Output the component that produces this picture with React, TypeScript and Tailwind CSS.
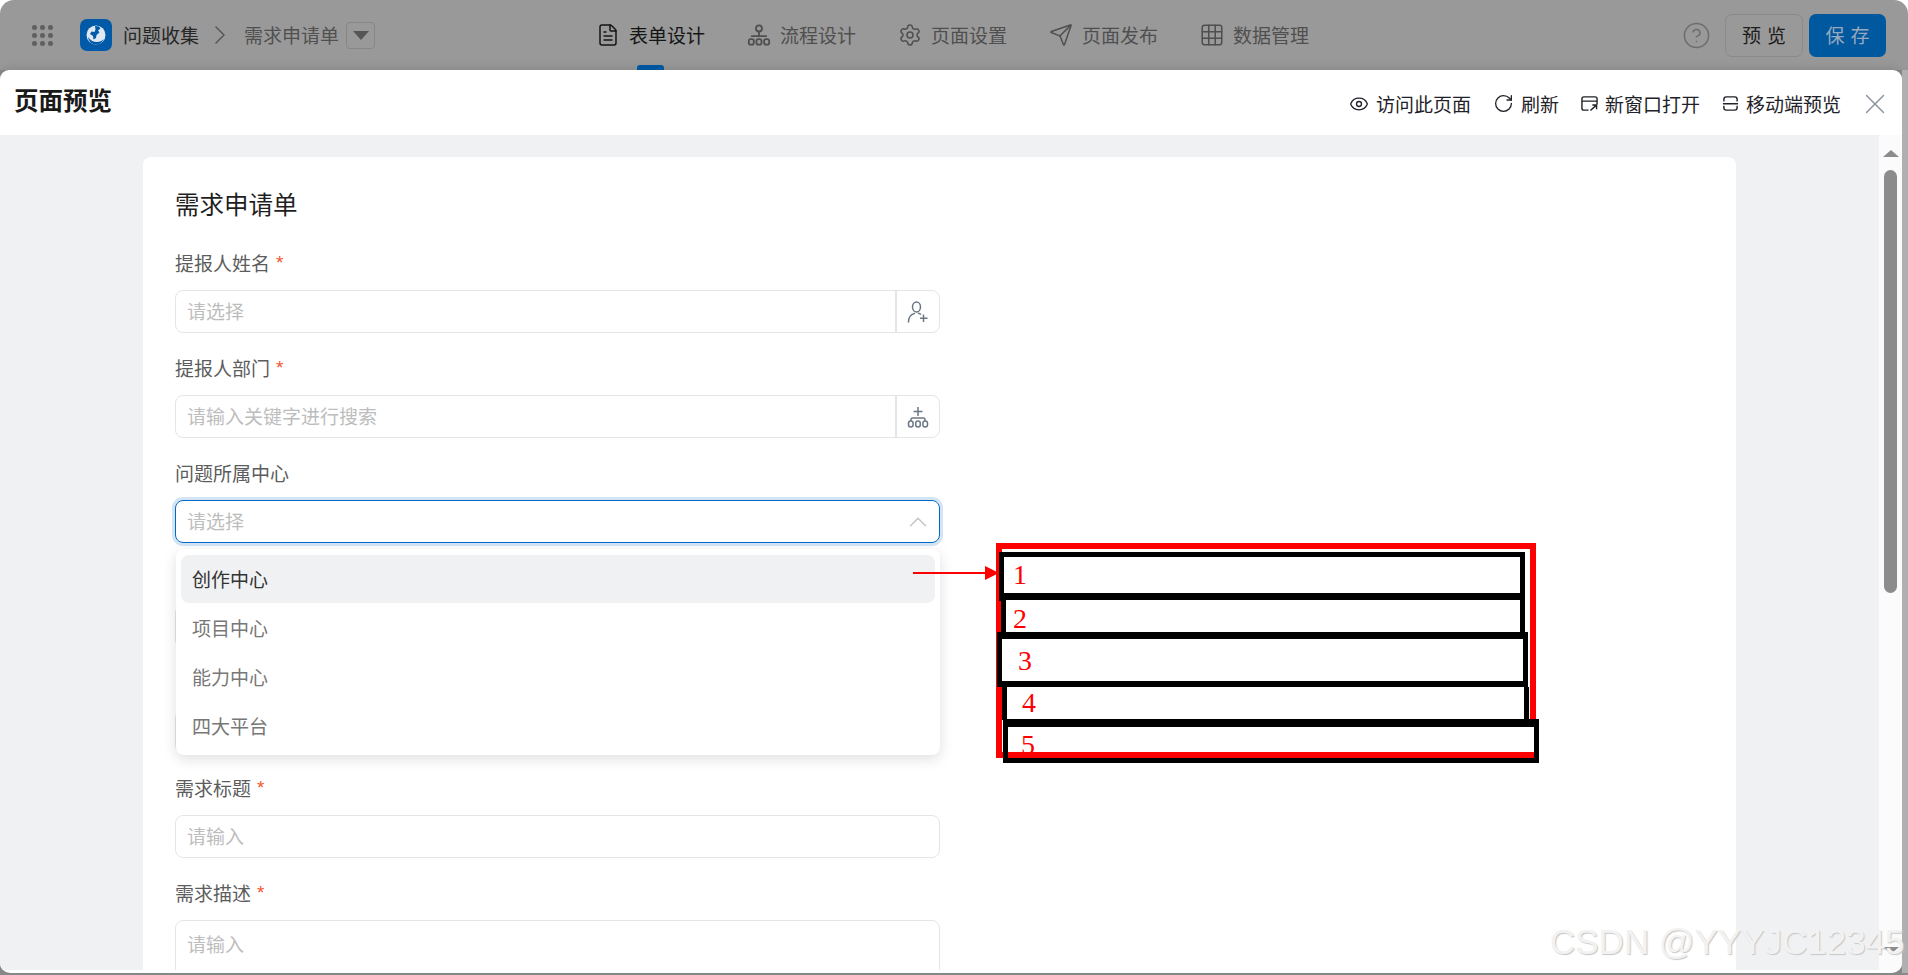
import React from "react";
import {
  ChevronRight,
  ChevronUp,
  CircleHelp,
  Eye,
  FileText,
  Grid3x3,
  RotateCw,
  Send,
  Settings,
  X,
} from "lucide-react";

const OrgIcon = ({ className }: { className?: string }) => (
  <svg viewBox="0 0 20 20" fill="none" stroke="currentColor" strokeWidth="1.5" className={className}>
    <circle cx="10" cy="4.5" r="2.5" />
    <path d="M4 11h12" strokeLinecap="round" />
    <path d="M10 7v4" />
    <rect x="1.5" y="13.5" width="4.2" height="4.5" rx="1.6" />
    <rect x="7.900" y="13.5" width="4.2" height="4.5" rx="1.6" />
    <rect x="14.3" y="13.5" width="4.2" height="4.5" rx="1.6" />
  </svg>
);

const DeptAddIcon = () => (
  <svg viewBox="0 0 22 22" fill="none" stroke="#6b7785" strokeWidth="1.5" className="h-[22px] w-[22px]">
    <path d="M11 1v9M6.5 5.500h9" />
    <path d="M4 15v-1.500c0-.8.6-1.500 1.500-1.500h11c.9 0 1.500.7 1.500 1.500V15" />
    <rect x="1.5" y="15" width="4.6" height="6" rx="2.2" />
    <rect x="8.7" y="15" width="4.6" height="6" rx="2.2" />
    <rect x="15.9" y="15" width="4.6" height="6" rx="2.2" />
  </svg>
);

const UserAddIcon = () => (
  <svg viewBox="0 0 22 22" fill="none" stroke="#6b7785" strokeWidth="1.5" className="h-[22px] w-[22px]">
    <ellipse cx="9.5" cy="6" rx="4" ry="5" />
    <path d="M1.5 21c0-4.500 2.500-7.500 6-8.600M11.500 12.200c.8.2 1.400.5 2 .9" strokeLinecap="round" />
    <path d="M16.500 13.500v7.500M13 17.200h7.500" />
  </svg>
);

const WindowIcon = () => (
  <svg viewBox="0 0 18 18" fill="none" stroke="#1f2329" strokeWidth="1.5" className="h-[17px] w-[17px]">
    <path d="M8 16H3a2 2 0 0 1-2-2V4a2 2 0 0 1 2-2h12a2 2 0 0 1 2 2v6" />
    <path d="M1 6.500h16" />
    <path d="M10 16.500l6-5.500M12 10.500h4.500V15" />
  </svg>
);

const MobileIcon = () => (
  <svg viewBox="0 0 18 18" fill="none" stroke="#1f2329" strokeWidth="1.5" className="h-[17px] w-[17px]">
    <path d="M2 7V4.500A2.500 2.500 0 0 1 4.500 2h9A2.500 2.500 0 0 1 16 4.500V7" />
    <path d="M1 9.200h16" />
    <path d="M2 11.500v2A2.500 2.500 0 0 0 4.500 16h9a2.500 2.500 0 0 0 2.500-2.500v-2" />
  </svg>
);

const Logo = () => (
  <div className="flex h-[32px] w-[32px] items-center justify-center rounded-[7px] bg-[#005aa8]">
    <svg viewBox="0 0 22 22" className="h-[22px] w-[22px]">
      <circle cx="11" cy="11" r="9.5" fill="#dfe8f2" />
      <path
        d="M10 2l4 .5 1.500 2-2.500 2 1.500 2-3 2.500-.5 3-2.500 1.500-.5-3.500L5 10l1.500-2.500 3 .5 1-2.500zM3 13c2 3 5 5 9 5 3 0 5-1 6.500-3-1 3.500-4 5.500-7.500 5.500-4 0-7.500-3-8-7.500z"
        fill="#005aa8"
      />
    </svg>
  </div>
);

const navItems = [
  { label: "表单设计", icon: <FileText className="h-[24px] w-[24px]" strokeWidth={1.5} />, active: true },
  { label: "流程设计", icon: <OrgIcon className="h-[24px] w-[24px]" /> },
  { label: "页面设置", icon: <Settings className="h-[24px] w-[24px]" strokeWidth={1.5} /> },
  { label: "页面发布", icon: <Send className="h-[24px] w-[24px]" strokeWidth={1.5} /> },
  { label: "数据管理", icon: <Grid3x3 className="-m-px h-[26px] w-[26px]" strokeWidth={1.4} /> },
];

const headerActions = [
  { label: "访问此页面", icon: <Eye className="h-[20px] w-[20px]" strokeWidth={1.6} /> },
  { label: "刷新", icon: <RotateCw className="h-[21px] w-[21px]" strokeWidth={1.5} /> },
  { label: "新窗口打开", icon: <WindowIcon /> },
  { label: "移动端预览", icon: <MobileIcon /> },
];

const options = ["创作中心", "项目中心", "能力中心", "四大平台"];

const numbers = [
  { n: "1", pos: "left-[1013px] top-[559px]" },
  { n: "2", pos: "left-[1013px] top-[603px]" },
  { n: "3", pos: "left-[1018px] top-[645px]" },
  { n: "4", pos: "left-[1022px] top-[687px]" },
  { n: "5", pos: "left-[1021px] top-[729px]" },
];

const Field = ({
  label,
  required,
  children,
}: {
  label?: string;
  required?: boolean;
  children: React.ReactNode;
}) => (
  <div className="mb-[23px]">
    <div className="mb-[13px] flex h-[26px] items-center pb-[2px] text-[19px] text-[#5c5c5c]">
      {label}
      {required && <span className="ml-[6px] font-['Liberation_Sans'] text-[#f5532d]">*</span>}
    </div>
    {children}
  </div>
);

const TextBox = ({ placeholder, addon }: { placeholder?: string; addon?: React.ReactNode }) => (
  <div className="flex h-[43px] w-[765px] items-center rounded-[8px] border border-[#e3e5e8] bg-white">
    <div className="flex-1 pl-[11px] text-[19px] text-[#bdbdbd]">{placeholder}</div>
    {addon && (
      <div className="flex h-full w-[44px] items-center justify-center border-l-2 border-[#e3e5e8]">{addon}</div>
    )}
  </div>
);

const App = () => {
  return (
    <div className="relative flex h-[975px] w-[1908px] flex-col overflow-hidden bg-white font-['Noto_Sans_CJK_SC','Noto_Sans',sans-serif]">
      {/* top bar under the mask */}
      <div className="flex h-[70px] shrink-0 items-center rounded-t-[14px] bg-[#999999] pl-[32px] pr-[22px]">
        <div className="grid w-[21px] grid-cols-3 gap-[3px]">
          {Array.from({ length: 9 }).map((_, i) => (
            <span key={i} className="h-[5px] w-[5px] rounded-full bg-[#5f5f5f]" />
          ))}
        </div>
        <div className="ml-[27px]">
          <Logo />
        </div>
        <span className="ml-[11px] text-[19px] text-[#262626]">问题收集</span>
        <ChevronRight className="ml-[5px] h-[32px] w-[32px] text-[#595959]" strokeWidth={1.2} />
        <span className="ml-[8px] text-[19px] text-[#505050]">需求申请单</span>
        <div className="ml-[7px] flex h-[27px] w-[29px] items-center justify-center rounded-[4px] border border-[#868686]">
          <span className="h-0 w-0 border-x-[8px] border-t-[9px] border-x-transparent border-t-[#555555]" />
        </div>

        <div className="ml-[221px] flex h-full gap-[42px]">
          {navItems.map((item) => (
            <div
              key={item.label}
              className={`relative flex w-[109px] items-center gap-[9px] ${item.active ? "text-[#141414]" : "text-[#4f4f4f]"}`}
            >
              {item.icon}
              <span className="text-[19px] whitespace-nowrap">{item.label}</span>
              {item.active && (
                <span className="absolute bottom-0 left-[41px] h-[5px] w-[27px] rounded-t-[3px] bg-[#00569e]" />
              )}
            </div>
          ))}
        </div>

        <div className="ml-auto flex items-center">
          <CircleHelp className="h-[29px] w-[29px] text-[#6e6e6e]" strokeWidth={1.3} />
          <div className="ml-[14px] flex h-[43px] w-[78px] items-center justify-center rounded-[7px] border border-[#8a8a8a] pl-[6px] text-[19px] tracking-[6px] text-[#1e1e1e]">
            预览
          </div>
          <div className="ml-[6px] flex h-[43px] w-[77px] items-center justify-center rounded-[7px] bg-[#00589f] pl-[6px] text-[19px] tracking-[6px] text-[#99a9bd]">
            保存
          </div>
        </div>
      </div>

      <div className="flex flex-1 items-start bg-[#8a8a8a]">
        {/* preview panel */}
        <div className="flex h-[903px] w-[1902px] flex-col overflow-hidden rounded-t-[9px] rounded-b-[10px] bg-white shadow-[0_-3px_8px_rgba(0,0,0,0.1)]">
          <div className="flex h-[65px] shrink-0 items-center pl-[14px] pr-[10px]">
            <h1 className="pb-[4px] text-[24.5px] font-bold text-[#1a1a1a]">页面预览</h1>
            <div className="ml-auto flex items-center pt-[2px] text-[#1f2329]">
              <div className="flex items-center gap-[22px]">
                {headerActions.map((action) => (
                  <div key={action.label} className="flex items-center gap-[7px]">
                    {action.icon}
                    <span className="text-[19px] leading-[26px] whitespace-nowrap">{action.label}</span>
                  </div>
                ))}
              </div>
              <X className="ml-[17px] h-[34px] w-[34px] text-[#8a929c]" strokeWidth={1} />
            </div>
          </div>

          <div className="flex h-[835px] shrink-0">
            <div className="flex-1 overflow-hidden bg-[#f0f1f3] pl-[143px] pt-[22px]">
              <div className="h-[900px] w-[1593px] rounded-[8px] bg-white pl-[32px] pt-[32px]">
                <div className="mb-[28px] h-[34px] text-[24.5px] leading-[30px] text-[#1f1f1f]">需求申请单</div>
                <Field label="提报人姓名" required>
                  <TextBox placeholder="请选择" addon={<UserAddIcon />} />
                </Field>
                <Field label="提报人部门" required>
                  <TextBox placeholder="请输入关键字进行搜索" addon={<DeptAddIcon />} />
                </Field>
                <Field label="问题所属中心">
                  <div className="flex h-[43px] w-[765px] items-center justify-between rounded-[8px] border-[1.5px] border-[#0068c9] pl-[11px] pr-[6px] shadow-[0_0_0_3px_#d3e4f5]">
                    <span className="text-[19px] text-[#bdbdbd]">请选择</span>
                    <ChevronUp className="h-[30px] w-[30px] text-[#c4c4c4]" strokeWidth={1.2} />
                  </div>
                </Field>
                <Field>
                  <TextBox />
                </Field>
                <Field>
                  <TextBox />
                </Field>
                <Field label="需求标题" required>
                  <TextBox placeholder="请输入" />
                </Field>
                <Field label="需求描述" required>
                  <div className="h-[110px] w-[765px] rounded-[8px] border border-[#e3e5e8] pl-[11px] pt-[9px] text-[19px] text-[#bdbdbd]">
                    请输入
                  </div>
                </Field>
              </div>
            </div>

            {/* scrollbar */}
            <div className="flex w-[23px] shrink-0 flex-col items-center bg-[#fbfbfb] pb-[16px] pt-[15px]">
              <span className="h-0 w-0 border-x-[8px] border-b-[7px] border-x-transparent border-b-[#8c8c8c]" />
              <span className="mt-[13px] h-[423px] w-[13px] rounded-full bg-[#8c8c8c]" />
              <span className="mt-auto h-0 w-0 border-x-[8px] border-t-[7px] border-x-transparent border-t-[#8c8c8c]" />
            </div>
          </div>
        </div>
        <div className="h-[903px] flex-1 bg-[#b0b0b0]" />
      </div>

      {/* open select menu */}
      <div className="absolute left-[176px] top-[549px] flex h-[206px] w-[764px] flex-col gap-px rounded-[8px] bg-white px-[5px] pt-[6px] shadow-[0_4px_14px_rgba(0,0,0,0.13)]">
        {options.map((option, i) => (
          <div
            key={option}
            className={`flex h-[48px] shrink-0 items-center rounded-[8px] pl-[11px] text-[19px] ${i === 0 ? "bg-[#f0f1f3] text-[#333333]" : "text-[#777777]"}`}
          >
            {option}
          </div>
        ))}
      </div>

      {/* hand drawn annotation */}
      <svg viewBox="0 0 90 16" className="absolute left-[913px] top-[565px] h-[16px] w-[90px]">
        <path d="M0 8h76" stroke="#ff0000" strokeWidth="2" />
        <path d="M72 1l14 7-14 7z" fill="#ff0000" />
      </svg>
      <div className="absolute left-[996px] top-[543px] h-[215px] w-[540px] border-[6px] border-[#ff0000]" />
      <div className="absolute left-[999px] top-[552px] h-[49px] w-[526px] border-x-[5px] border-b-[8px] border-t-[5px] border-black bg-white" />
      <div className="absolute left-[1001px] top-[600px] h-[33px] w-[524px] border-x-[5px] border-black bg-white" />
      <div className="absolute left-[997px] top-[632px] h-[55px] w-[531px] border-x-[5px] border-b-[6px] border-t-[7px] border-black bg-white" />
      <div className="absolute left-[1002px] top-[687px] h-[33px] w-[527px] border-x-[5px] border-black bg-white" />
      <div className="absolute left-[1003px] top-[719px] h-[33px] w-[536px] border-x-[5px] border-t-[8px] border-black bg-white" />
      {numbers.map(({ n, pos }) => (
        <span key={n} className={`absolute ${pos} font-['Liberation_Serif'] text-[28px] leading-[32px] text-[#ff0000]`}>
          {n}
        </span>
      ))}
      <div className="absolute left-[1003px] top-[752px] h-[11px] w-[536px] border-x-[5px] border-b-[5px] border-black bg-[#ff0000]" />

      {/* watermark */}
      <span className="pointer-events-none absolute left-[1550px] top-[922px] font-['Liberation_Sans'] text-[35px] leading-[40px] whitespace-nowrap text-[#f2f2f2] [text-shadow:1px_1px_1px_#c6c6c6]">
        CSDN @YYYJC12345
      </span>
    </div>
  );
};

export default App;
